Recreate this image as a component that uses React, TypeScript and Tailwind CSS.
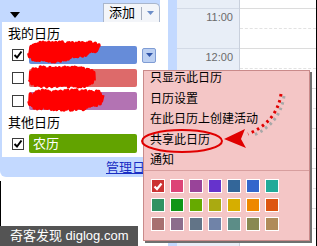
import React from "react";

const ROW1 = ["#cc3333", "#dd4477", "#994499", "#6633cc", "#336699", "#3366cc", "#22aa99"];
const ROW2 = ["#329262", "#109618", "#66aa00", "#aaaa11", "#d6ae00", "#ee8800", "#dd5511"];
const ROW3 = ["#a87070", "#8c6d8c", "#627487", "#7083a8", "#5c8d87", "#898951", "#b08b59"];

function rng(seed: number) {
  let s = seed;
  return () => {
    s = (s * 9301 + 49297) % 233280;
    return s / 233280;
  };
}

function scribble(
  x0: number,
  x1: number,
  top: (t: number) => number,
  bottom: (t: number) => number,
  seed: number
) {
  const r = rng(seed);
  const pts: string[] = [];
  let i = 0;
  for (let x = x0; x <= x1; x += 1.2, i++) {
    const t = (x - x0) / (x1 - x0);
    const e = Math.sqrt(Math.max(0, 1 - Math.pow(2 * t - 1, 8)));
    const tp = top(t);
    const bt = bottom(t);
    const mid = (tp + bt) / 2;
    const half = ((bt - tp) / 2) * e;
    const y = i % 2 === 0 ? mid - half + r() * 2.5 : mid + half - r() * 2.5;
    pts.push(`${(x + r() * 1.5).toFixed(1)},${y.toFixed(1)}`);
  }
  return "M" + pts.join(" L");
}

function Checkbox() {
  return (
    <div className="w-[12px] h-[12px] border border-[#3c3c3c] bg-white shrink-0 flex items-center justify-center">
      <svg width="10" height="10" viewBox="0 0 10 10">
        <path d="M1.5 5 L4 7.5 L8.5 1.5" stroke="#000" strokeWidth="2" fill="none" />
      </svg>
    </div>
  );
}

function EmptyBox() {
  return <div className="w-[12px] h-[12px] border border-[#3c3c3c] bg-white shrink-0" />;
}

export default function App() {
  const s1 = scribble(28, 100, () => 42, (t) => (t < 0.45 ? 62 : 62 - ((t - 0.45) / 0.55) * 11), 7);
  const s2 = scribble(28, 95, () => 67, () => 87, 19);
  const s3 = scribble(28, 103, () => 90, (t) => (t < 0.7 ? 110 : 110 - ((t - 0.7) / 0.3) * 5), 31);

  return (
    <div className="relative w-[317px] h-[246px] overflow-hidden bg-white flex font-['Liberation_Sans','Noto_Sans_CJK_SC',sans-serif] text-black">
      {/* Sidebar */}
      <div className="w-[160px] shrink-0 flex flex-col">
        <div className="h-[177px] bg-[#c3d9ff] rounded-bl-[6px] flex flex-col">
          <div className="h-[22px] flex shrink-0">
            <div className="pl-[10px] pt-[12px]">
              <svg width="10" height="6" viewBox="0 0 10 6">
                <polygon points="0,0 10,0 5,6" fill="#000" />
              </svg>
            </div>
            <div className="ml-auto mt-[3px] w-[57px] h-[19px] bg-[#f3f5f9] border border-[#a9b6cc] border-b-0 rounded-tr-[5px] flex items-center">
              <span className="text-[13px] leading-[14px] pl-[5px]">添加</span>
              <div className="w-px h-[13px] bg-[#a7afbf] ml-[6px]" />
              <svg className="ml-[5px]" width="7" height="4" viewBox="0 0 7 4">
                <polygon points="0,0 7,0 3.5,4" fill="#6d8ec8" />
              </svg>
            </div>
          </div>
          <div className="ml-[2px] bg-white h-[135px] flex flex-col pt-[4px]">
            <div className="pl-[6px] text-[13px] leading-[16px] h-[16px]">我的日历</div>
            <div className="mt-[4px] flex flex-col gap-[5px]">
              <div className="flex items-center h-[18px] pl-[10px]">
                <Checkbox />
                <div className="ml-[5px] w-[108px] h-[18px] rounded-[2px] bg-[#668cd9]" />
                <div className="ml-[5px] w-[14px] h-[15px] rounded-[2px] bg-[#bcd0f2] border border-[#7f9cd4] flex items-center justify-center">
                  <svg width="7" height="4" viewBox="0 0 7 4">
                    <polygon points="0,0 7,0 3.5,4" fill="#2f54a8" />
                  </svg>
                </div>
              </div>
              <div className="flex items-center h-[18px] pl-[10px]">
                <EmptyBox />
                <div className="ml-[5px] w-[108px] h-[18px] rounded-[2px] bg-[#dd6a6a]" />
              </div>
              <div className="flex items-center h-[18px] pl-[10px]">
                <EmptyBox />
                <div className="ml-[5px] w-[108px] h-[18px] rounded-[2px] bg-[#b373b3]" />
              </div>
            </div>
            <div className="mt-[5px] pl-[6px] text-[13px] leading-[16px] h-[16px]">其他日历</div>
            <div className="mt-[3px] flex items-center h-[19px] pl-[10px]">
              <Checkbox />
              <div className="ml-[5px] w-[108px] h-[19px] rounded-[2px] bg-[#62a300] text-white text-[13px] leading-[19px] pl-[4px]">
                农历
              </div>
            </div>
          </div>
          <div className="flex-1 flex items-center justify-end pr-[2px]">
            <span className="text-[13px] leading-[15px] text-[#1a2fc4] underline">管理日历</span>
          </div>
        </div>
      </div>

      {/* Calendar area */}
      <div className="flex-1 flex pl-[8px]">
        <div className="w-[9px] bg-[#c3d9ff]" />
        <div className="flex-1 flex flex-col">
          <div className="h-px bg-black" />
          <div className="flex-1 flex">
            <div className="w-[62px] bg-[#e8eef7] flex flex-col pt-[8px]">
              {["11:00", "12:00", "", "", "", ""].map((t, i) => (
                <div
                  key={i}
                  className="h-[40px] shrink-0 border-t border-[#d3dae6] text-right pr-[6px] pt-[3px] text-[11px] leading-[11px] text-[#6b6b6b]"
                >
                  {t}
                </div>
              ))}
            </div>
            <div className="w-[77px] border-l border-[#c9d0dc] flex flex-col pt-[8px]">
              {[0, 1, 2, 3, 4, 5].map((i) => (
                <div key={i} className="h-[40px] shrink-0 border-t border-[#dcdcdc]">
                  <div className="h-[20px] border-b border-dashed border-[#e2e2e2]" />
                </div>
              ))}
            </div>
          </div>
        </div>
        <div className="w-px bg-black" />
      </div>

      {/* Popup menu */}
      <div className="absolute left-[143px] top-[70px] w-[167px] h-[171px] bg-[#f4c6c6] border border-[#c98a8a] shadow-[2px_2px_0_#6f6f6f] flex flex-col">
        <div className="pl-[6px] flex flex-col gap-[6.5px] text-[12px] leading-[14px]">
          <div>只显示此日历</div>
          <div>日历设置</div>
          <div>在此日历上创建活动</div>
          <div>共享此日历</div>
          <div>通知</div>
        </div>
        <div className="mt-[3px] h-px bg-[#d79e9e]" />
        <div className="mt-[8px] pl-[7px] grid grid-cols-[repeat(7,14px)] gap-[5px]">
          {[...ROW1, ...ROW2, ...ROW3].map((c, i) => (
            <div
              key={i}
              className="w-[14px] h-[14px] border border-white flex items-center justify-center"
              style={{ backgroundColor: c }}
            >
              {i === 0 && (
                <svg width="10" height="9" viewBox="0 0 10 9">
                  <path d="M1.5 4.5 L4 7 L8.5 1.5" stroke="#fff" strokeWidth="2.2" fill="none" />
                </svg>
              )}
            </div>
          ))}
        </div>
      </div>

      {/* Overlay drawings: scribbles, ellipse, arrow */}
      <svg className="absolute left-0 top-0 pointer-events-none" width="317" height="246" viewBox="0 0 317 246">
        <path d={s1} stroke="#ff0000" strokeWidth="3.6" fill="none" strokeLinejoin="round" />
        <path d={s2} stroke="#ff0000" strokeWidth="3.6" fill="none" strokeLinejoin="round" />
        <path d={s3} stroke="#ff0000" strokeWidth="3.6" fill="none" strokeLinejoin="round" />
        <ellipse cx="182" cy="141" rx="40" ry="11" stroke="#e00000" strokeWidth="2" fill="none" />
        <path
          d="M284 96 Q280 124 252 136"
          stroke="#a8a8a8"
          strokeWidth="3"
          strokeDasharray="2.5 3.5"
          fill="none"
        />
        <path
          d="M281 94 Q277 122 248 134"
          stroke="#e00000"
          strokeWidth="3"
          strokeDasharray="2.5 3.5"
          fill="none"
        />
        <polygon points="224,139 245,129 241,139 246,148" fill="#e00000" />
      </svg>

      {/* Left black edge below sidebar */}
      <div className="absolute left-0 top-[181px] w-px h-[45px] bg-black" />

      {/* Watermark label */}
      <div className="absolute left-0 bottom-0 w-[138px] h-[20px] bg-[#545454] text-white text-[13px] leading-[20px] pl-[10px] whitespace-nowrap">
        奇客发现 diglog.com
      </div>
    </div>
  );
}
